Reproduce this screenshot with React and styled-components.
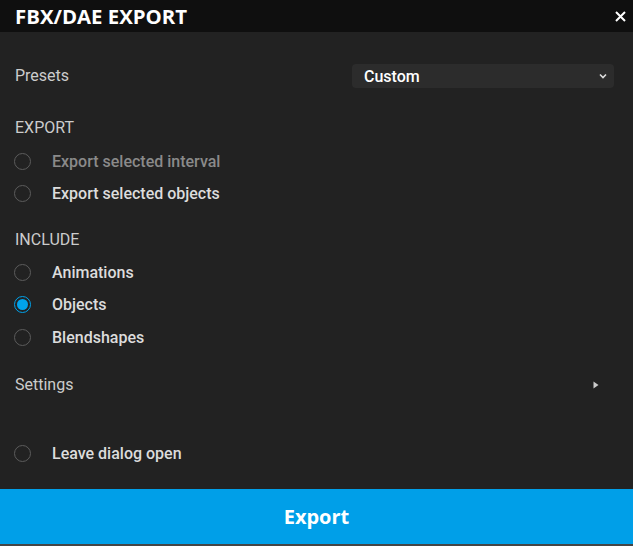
import React, { useState } from 'react';
import styled, { createGlobalStyle } from 'styled-components';

const GlobalStyle = createGlobalStyle`
  html, body {
    margin: 0;
    padding: 0;
    background-color: #454545;
  }
  * {
    box-sizing: border-box;
  }
`;

const Dialog = styled.div`
  display: flex;
  flex-direction: column;
  width: 633px;
  height: 544px;
  background-color: #222222;
  font-family: Roboto, 'Liberation Sans', sans-serif;
`;

const Header = styled.div`
  display: flex;
  align-items: center;
  justify-content: space-between;
  height: 32px;
  padding: 0 3px 0 15px;
  background-color: #0f0f0f;
`;

const Title = styled.h1`
  margin: 0;
  font-family: 'Open Sans', 'DejaVu Sans', sans-serif;
  font-size: 20.4px;
  font-weight: 700;
  color: #ffffff;
  line-height: 32px;
`;

const CloseButton = styled.button`
  display: flex;
  align-items: center;
  justify-content: center;
  width: 20px;
  height: 20px;
  padding: 0;
  border: none;
  background: none;
  cursor: pointer;
`;

const Content = styled.div`
  display: flex;
  flex-direction: column;
  flex: 1;
  padding: 32px 20px 0 15px;
`;

const PresetsRow = styled.div`
  display: flex;
  align-items: center;
  justify-content: space-between;
  height: 24px;
`;

const Label = styled.span`
  font-size: 16px;
  color: #cccccc;
  line-height: 18px;
`;

const Select = styled.div`
  display: flex;
  align-items: center;
  justify-content: space-between;
  width: 262px;
  height: 24px;
  margin-right: -1px;
  padding: 0 7px 0 12px;
  border-radius: 4px;
  background-color: #2c2c2c;
  font-size: 16px;
  font-weight: 500;
  color: #ffffff;
`;

const SectionTitle = styled.div`
  margin-top: ${({ $top }) => $top}px;
  font-size: 16px;
  line-height: 18px;
  color: #cccccc;
`;

const OptionList = styled.div`
  display: flex;
  flex-direction: column;
  margin-top: ${({ $top }) => $top}px;
`;

const Option = styled.label`
  display: flex;
  align-items: center;
  gap: 21px;
  height: ${({ $h }) => $h || 32}px;
  margin-left: -1px;
  font-size: 16px;
  font-weight: 500;
  color: ${({ $disabled }) => ($disabled ? '#8a8a8a' : '#dcdcdc')};
  cursor: ${({ $disabled }) => ($disabled ? 'default' : 'pointer')};
`;

const Radio = styled.span`
  position: relative;
  width: 17px;
  height: 17px;
  flex-shrink: 0;
  border-radius: 50%;
  border: 1.5px solid ${({ $checked }) => ($checked ? '#00a3ec' : '#5c5c5c')};

  &::after {
    content: '';
    position: absolute;
    inset: 2px;
    border-radius: 50%;
    background-color: ${({ $checked }) => ($checked ? '#00a3ec' : 'transparent')};
  }
`;

const SettingsRow = styled.div`
  display: flex;
  align-items: center;
  justify-content: space-between;
  margin-top: 22px;
  padding-right: 14px;
  height: 18px;
  font-size: 16px;
  color: #cccccc;
`;

const Spacer = styled.div`
  flex: 1;
`;

const ExportButton = styled.button`
  height: 55px;
  width: 100%;
  border: none;
  background-color: #009fe8;
  color: #ffffff;
  font-family: 'Open Sans', 'DejaVu Sans', sans-serif;
  font-size: 20px;
  font-weight: 700;
  cursor: pointer;
`;

const exportOptions = [
  { id: 'interval', label: 'Export selected interval', disabled: true },
  { id: 'objects', label: 'Export selected objects' },
];

const includeOptions = [
  { id: 'animations', label: 'Animations' },
  { id: 'objects', label: 'Objects' },
  { id: 'blendshapes', label: 'Blendshapes' },
];

const App = () => {
  const [include, setInclude] = useState({ objects: true });
  const [leaveOpen, setLeaveOpen] = useState(false);

  return (
    <>
      <GlobalStyle />
      <Dialog>
        <Header>
          <Title>FBX/DAE EXPORT</Title>
          <CloseButton aria-label="Close">
            <svg width="11" height="11" viewBox="0 0 11 11">
              <path d="M1 1 L10 10 M10 1 L1 10" stroke="#ffffff" strokeWidth="2" />
            </svg>
          </CloseButton>
        </Header>

        <Content>
          <PresetsRow>
            <Label>Presets</Label>
            <Select>
              Custom
              <svg width="8" height="6" viewBox="0 0 8 6">
                <path d="M1 1.5 L4 4.5 L7 1.5" stroke="#dddddd" strokeWidth="1.6" fill="none" />
              </svg>
            </Select>
          </PresetsRow>

          <SectionTitle $top={31}>EXPORT</SectionTitle>
          <OptionList $top={8}>
            {exportOptions.map(o => (
              <Option key={o.id} $disabled={o.disabled}>
                <Radio />
                {o.label}
              </Option>
            ))}
          </OptionList>

          <SectionTitle $top={22}>INCLUDE</SectionTitle>
          <OptionList $top={7}>
            {includeOptions.map(o => (
              <Option
                key={o.id}
                $h={32.5}
                onClick={() => setInclude({ ...include, [o.id]: !include[o.id] })}
              >
                <Radio $checked={!!include[o.id]} />
                {o.label}
              </Option>
            ))}
          </OptionList>

          <SettingsRow>
            Settings
            <svg width="6" height="8" viewBox="0 0 6 8">
              <path d="M0.5 0.5 L5.5 4 L0.5 7.5 Z" fill="#cccccc" />
            </svg>
          </SettingsRow>

          <OptionList $top={44}>
            <Option onClick={() => setLeaveOpen(!leaveOpen)}>
              <Radio $checked={leaveOpen} />
              Leave dialog open
            </Option>
          </OptionList>

          <Spacer />
        </Content>

        <ExportButton>Export</ExportButton>
      </Dialog>
    </>
  );
};

export default App;
